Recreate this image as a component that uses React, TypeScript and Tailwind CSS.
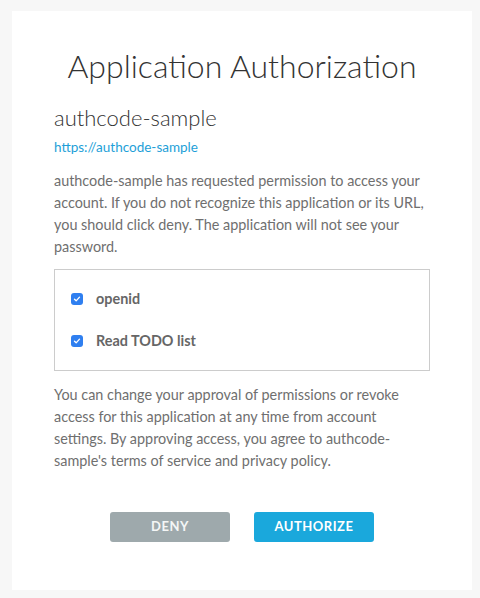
import React from 'react'

const scopes = ['openid', 'Read TODO list']

function Check() {
  return (
    <span className="flex h-[12px] w-[12px] items-center justify-center rounded-[3px] bg-[#2f7ff0]">
      <svg viewBox="0 0 12 12" className="h-[10px] w-[10px]">
        <path d="M3 6.2l2 2 4-4.4" fill="none" stroke="#fff" strokeWidth="1.6" strokeLinecap="round" strokeLinejoin="round" />
      </svg>
    </span>
  )
}

export default function App() {
  return (
    <div className="min-h-[598px] bg-[#f7f7f7] pl-[12px] pr-[8px] pt-[11px] pb-[8px]" style={{ fontFamily: 'Lato, "Noto Sans", sans-serif' }}>
      <div className="w-[460px] bg-white px-[42px] pt-[33px] pb-[48px]">
        <h1 className="text-center text-[32px] font-light leading-[44px] text-[#333]">Application Authorization</h1>

        <h2 className="mt-[15px] text-[22px] font-light leading-[30px] text-[#333]">authcode-sample</h2>
        <a className="mt-[4px] block text-[13.5px] leading-[20px] text-[#1e9fd8]">https://authcode-sample</a>

        <p className="mt-[13px] text-[14.4px] leading-[22px] text-[#6f6f6f]">
          authcode-sample has requested permission to access your account. If you do not recognize this application or its URL, you should click deny. The application will not see your password.
        </p>

        <div className="mt-[11px] border border-[#cccccc] px-[16px] py-[8px]">
          {scopes.map((s) => (
            <label key={s} className="flex h-[42px] items-center gap-[13px]">
              <Check />
              <span className="text-[14.4px] font-bold text-[#666]">{s}</span>
            </label>
          ))}
        </div>

        <p className="mt-[13px] text-[14.4px] leading-[22px] text-[#6f6f6f]">
          You can change your approval of permissions or revoke access for this application at any time from account settings. By approving access, you agree to authcode-sample's terms of service and privacy policy.
        </p>

        <div className="mt-[40px] flex justify-center gap-[24px]">
          <button className="h-[30px] w-[120px] rounded-[3px] bg-[#9ea9ac] text-[13px] font-bold tracking-[0.5px] text-[#f4f6f6]">DENY</button>
          <button className="h-[30px] w-[120px] rounded-[3px] bg-[#1aa8dc] text-[13px] font-bold tracking-[0.5px] text-white">AUTHORIZE</button>
        </div>
      </div>
    </div>
  )
}
